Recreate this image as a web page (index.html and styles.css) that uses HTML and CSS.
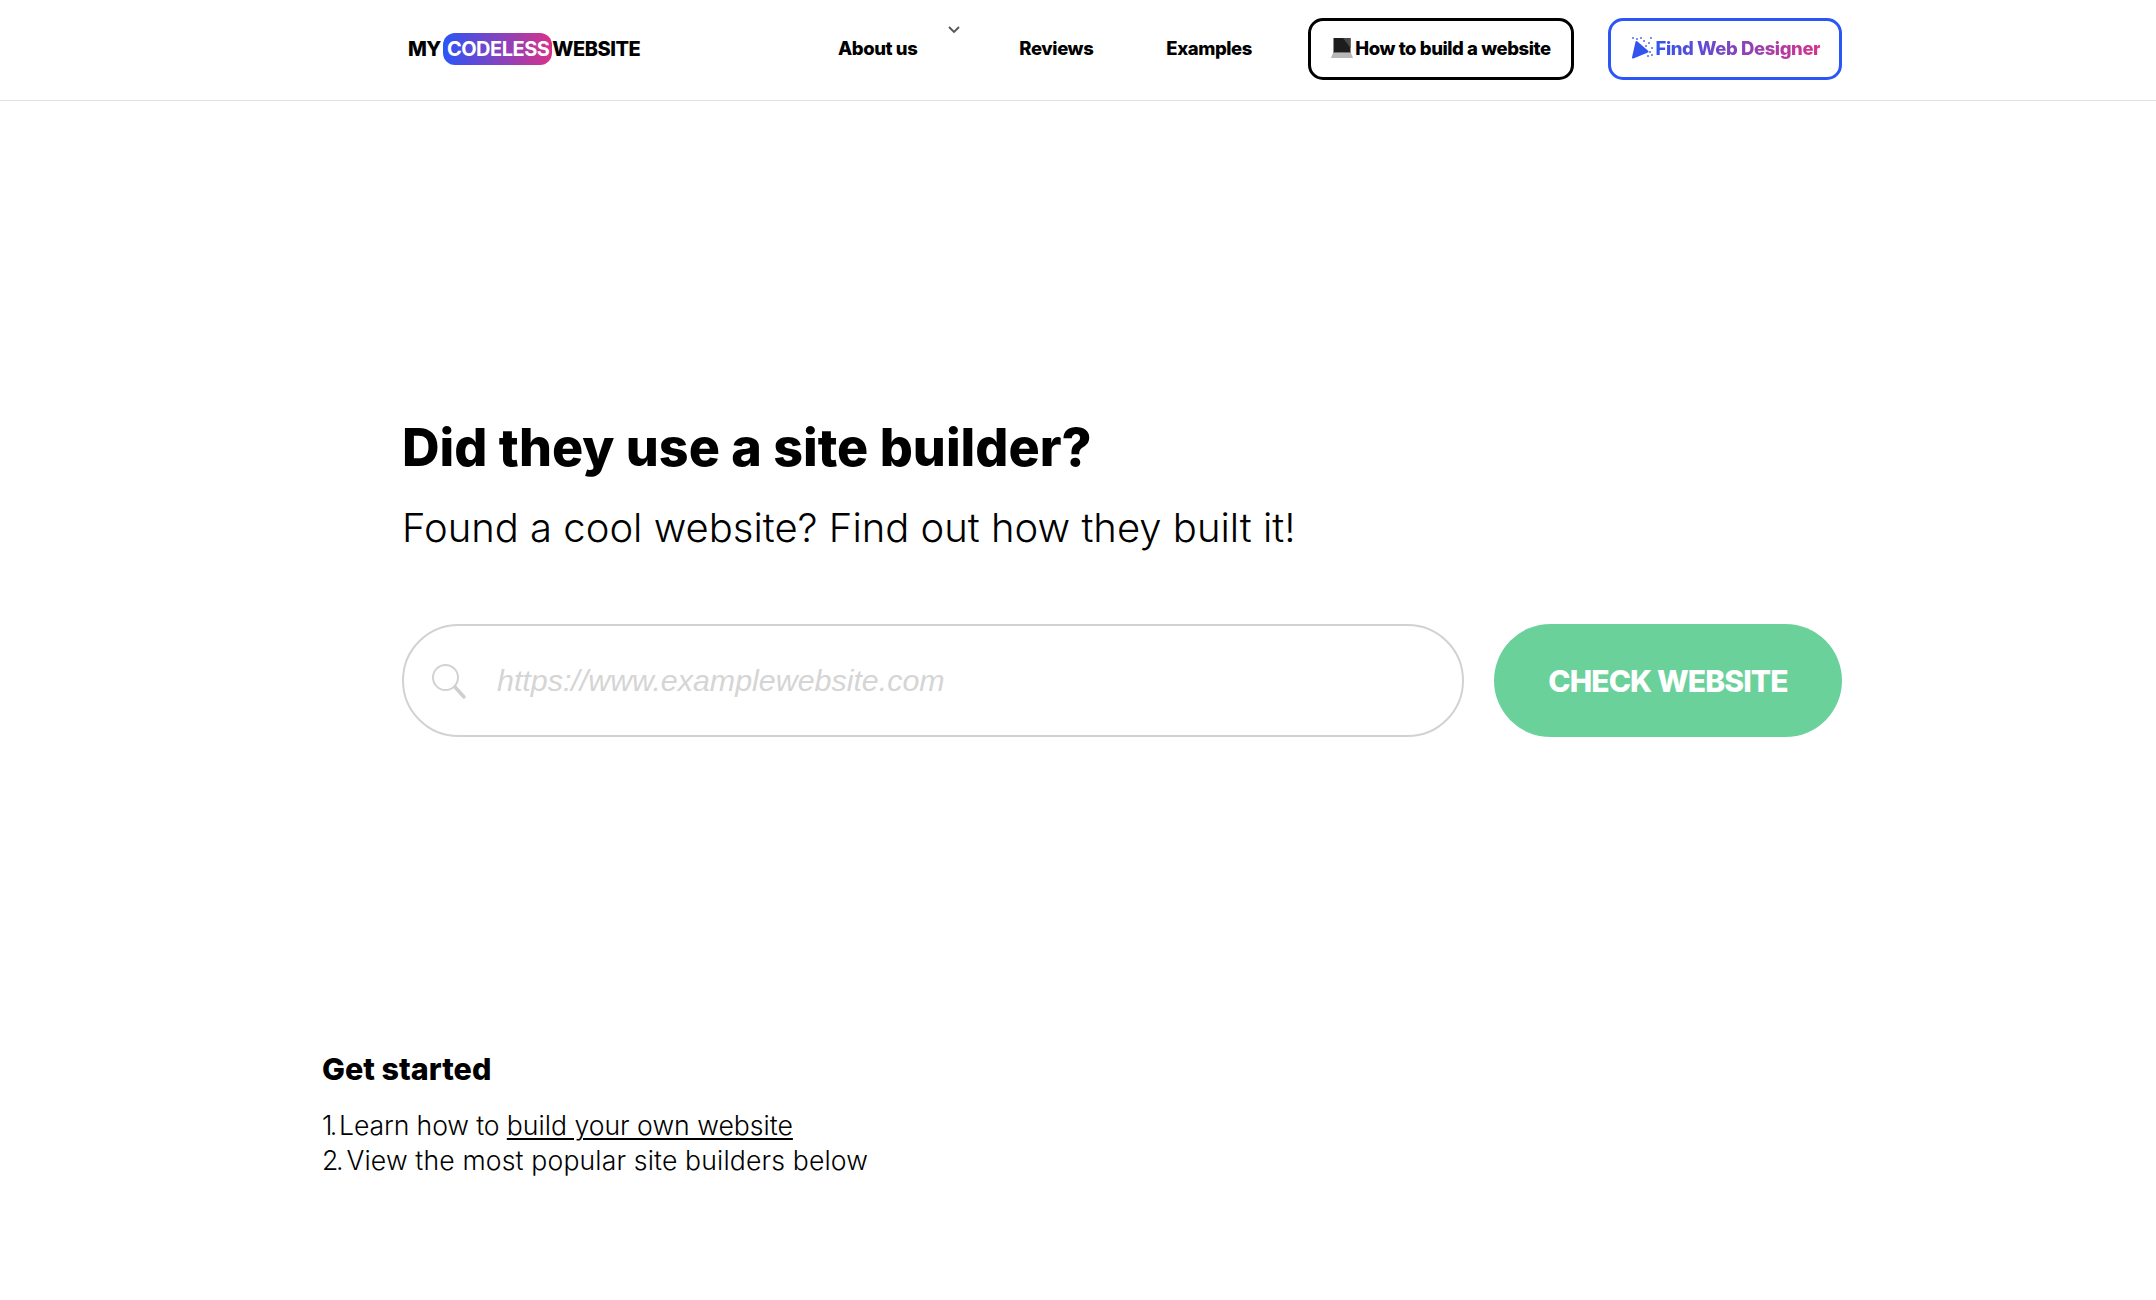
FILE: index.html
```html
<!DOCTYPE html>
<html lang="en">
<head>
<meta charset="utf-8">
<title>Did they use a site builder?</title>
<link rel="stylesheet" href="styles.css">
</head>
<body>
<header class="site-header">
  <a class="logo" href="#">
    <span class="logo-word">MY</span>
    <span class="logo-pill">CODELESS</span>
    <span class="logo-word">WEBSITE</span>
  </a>
  <nav class="nav">
    <a class="nav-link nav-about" href="#">About us
      <svg class="chevron" width="14" height="9" viewBox="0 0 14 9"><path d="M2 2l5 5 5-5" fill="none" stroke="#555" stroke-width="1.8"/></svg>
    </a>
    <a class="nav-link nav-reviews" href="#">Reviews</a>
    <a class="nav-link nav-examples" href="#">Examples</a>
    <a class="btn btn-dark" href="#">
      <svg class="btn-icon" width="22" height="22" viewBox="0 0 22 22"><path d="M2.500 1h17v15h-17z" fill="#1d1d1d"/><path d="M12 1h7.500v10z" fill="#4a4a4a"/><path d="M2.500 15h17v1h-17z" fill="#777"/><path d="M2 16h18l2 5H0z" fill="#b8b8b8"/></svg>
      <span>How to build a website</span>
    </a>
    <a class="btn btn-blue" href="#">
      <svg class="btn-icon" width="24" height="24" viewBox="0 0 24 24"><path d="M3 21.500L6.500 6 17.500 15.500z" fill="#3355ee" stroke="#3355ee" stroke-width="2" stroke-linejoin="round"/><g fill="#7d93ef"><rect x="2" y="1" width="2" height="2"/><rect x="6" y="2" width="2" height="2"/><rect x="10" y="1" width="2" height="2"/><rect x="13" y="4" width="2" height="2"/><rect x="20" y="1" width="2" height="2"/><rect x="18" y="6" width="2" height="2"/><rect x="15" y="9" width="2" height="2"/><rect x="21" y="11" width="2" height="2"/><rect x="19" y="15" width="2" height="2"/><rect x="17" y="19" width="2" height="2"/><rect x="21" y="18" width="2" height="2"/></g></svg>
      <span class="gradient-text">Find Web Designer</span>
    </a>
  </nav>
</header>
<main>
  <section class="hero">
    <h1 class="hero-title">Did they use a site builder?</h1>
    <p class="hero-sub">Found a cool website? Find out how they built it!</p>
    <form class="search">
      <div class="search-field">
        <svg class="search-icon" width="38" height="38" viewBox="0 0 38 38"><circle cx="15.500" cy="15.500" r="12.500" fill="none" stroke="#d2d2d2" stroke-width="2"/><path d="M25 25l9 10" fill="none" stroke="#cfcfcf" stroke-width="3.500" stroke-linecap="round"/></svg>
        <span class="placeholder">https://www.examplewebsite.com</span>
      </div>
      <button class="check-btn" type="button">CHECK WEBSITE</button>
    </form>
  </section>
  <section class="started">
    <h2 class="started-title">Get started</h2>
    <p class="started-list"><span class="list-num-first">1. </span><span class="list-lead">Learn how to </span><a href="#">build your own website</a><br><span class="list-num">2. </span><span class="list-wide">View the most popular site builders below</span></p>
  </section>
</main>
</body>
</html>
```
FILE: styles.css
```css
* { box-sizing: border-box; }
html, body { margin: 0; height: 100%; }
body {
  background: #fff;
  color: #000;
  font-family: "Inter", "Liberation Sans", sans-serif;
  overflow: hidden;
}
a { color: inherit; text-decoration: none; }

.site-header {
  height: 101px;
  border-bottom: 1px solid #e2e2e2;
  display: flex;
  align-items: center;
  justify-content: space-between;
  padding: 0 314px 2px 408px;
}
.logo { display: flex; align-items: center; font-weight: 800; font-size: 20px; letter-spacing: -0.5px; }
.logo-pill {
  background: linear-gradient(90deg, #2b55f6, #d8328a);
  color: #fff;
  border-radius: 12px;
  padding: 0 3px 0 4px;
  height: 32px;
  line-height: 32px;
  margin: 0 0 0 2px;
  font-weight: 700;
}
.nav { display: flex; align-items: center; font-weight: 800; font-size: 18.500px; letter-spacing: -0.42px; }
.nav-link { display: block; padding-bottom: 3px; }
.nav-about { position: relative; margin-right: 102px; }
.chevron { position: absolute; left: 109px; top: -12px; }
.nav-reviews { margin-right: 73px; }
.nav-examples { margin-right: 56px; }
.btn {
  height: 62px;
  border-radius: 15px;
  border: 3px solid #000;
  display: flex;
  align-items: center;
  justify-content: center;
  gap: 2px;
  background: #fff;
  padding-bottom: 3px;
}
.btn-dark { width: 266px; margin-right: 34px; }
.btn-blue { width: 234px; border-color: #2b55f6; }
.gradient-text {
  background: linear-gradient(90deg, #3355ee, #d8328a);
  -webkit-background-clip: text;
  background-clip: text;
  color: transparent;
}

.hero { padding: 319px 314px 0 402px; }
.hero-title { margin: 0; font-size: 52px; line-height: 56px; font-weight: 800; }
.hero-sub { margin: 27px 0 0; font-size: 40px; line-height: 50px; font-weight: 300; }
.search { display: flex; gap: 30px; margin-top: 71px; height: 113px; }
.search-field {
  flex: 1;
  border: 2px solid #d2d2d2;
  border-radius: 57px;
  display: flex;
  align-items: center;
  padding-left: 26px;
  gap: 29px;
}
.placeholder { font-family: "Liberation Sans", sans-serif; font-style: italic; font-size: 30.400px; color: #d5d5d5; }
.check-btn {
  width: 348px;
  border: 0;
  border-radius: 57px;
  background: #6bd19b;
  color: #fff;
  font: 800 30px "Inter", sans-serif;
  letter-spacing: -0.9px;
  padding: 0;
}
.started { padding: 0 0 0 322px; margin-top: 313px; }
.started-title { margin: 0; font-size: 30.500px; line-height: 38px; font-weight: 800; }
.started-list { margin: 20px 0 0; font-size: 26.600px; line-height: 34.500px; font-weight: 300; }
.list-num-first { letter-spacing: -2.800px; }
.list-lead { letter-spacing: -0.12px; }
.list-num { letter-spacing: -2.300px; }
.list-wide { letter-spacing: 0.15px; }
.started-list a { text-decoration: underline; text-underline-offset: 3px; text-decoration-thickness: 1.500px; }
```
